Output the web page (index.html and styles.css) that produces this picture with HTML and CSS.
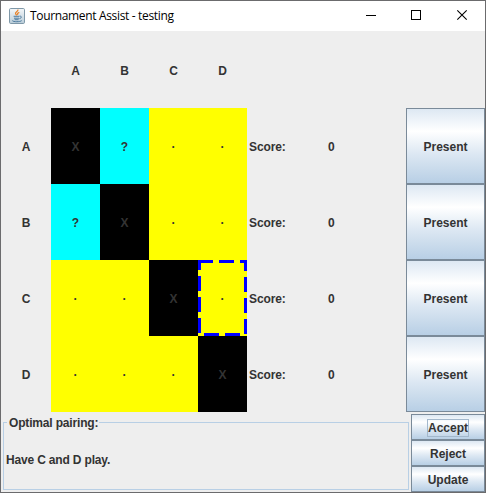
FILE: index.html
```html
<!DOCTYPE html>
<html lang="en">
<head>
<meta charset="utf-8">
<title>Tournament Assist - testing</title>
<link rel="stylesheet" href="styles.css">
</head>
<body>
<div class="window">
  <header class="titlebar">
    <svg class="app-icon" width="16" height="16" viewBox="0 0 16 16">
      <defs><linearGradient id="tile" x1="0" y1="0" x2="0" y2="1"><stop offset="0" stop-color="#f4f7f9"/><stop offset="1" stop-color="#b9ccd8"/></linearGradient></defs>
      <rect x=".5" y=".5" width="15" height="15" rx="1.2" fill="url(#tile)" stroke="#7f98a8"/>
      <path d="M8.800 1.500c1 2-3.200 2.600-2.200 4.300.3.600.9 1 1 1.700M10.300 4.300c-1.900.9-2.300 1.500-1.300 2.500" fill="none" stroke="#e8832a" stroke-width="1.300"/>
      <path d="M4.600 8.300h5.600M5 10.200h5M10.500 8.200c2.700-.4 2.300 1.900-.1 2.500M5.600 11.700h4M3.300 12.600c1 1.500 7.900 1.400 9.400 0" fill="none" stroke="#4f7c9f"/>
    </svg>
    <span class="title">Tournament Assist - testing</span>
    <div class="controls">
      <svg width="46" height="30"><path d="M19 14.500h10" stroke="#000"/></svg>
      <svg width="46" height="30"><rect x="18.500" y="9.500" width="9" height="9" fill="none" stroke="#000"/></svg>
      <svg width="46" height="30"><path d="M18.300 9.300l9.400 9.400M27.700 9.300l-9.400 9.400" stroke="#000" stroke-width="1.100"/></svg>
    </div>
  </header>
  <main class="board">
    <span></span><span>A</span><span>B</span><span>C</span><span>D</span><span></span><span></span><span></span>

    <span>A</span><span class="self">X</span><span class="open">?</span><span class="free">·</span><span class="free">·</span>
    <span class="score">Score:</span><span class="points">0</span><button>Present</button>

    <span>B</span><span class="open">?</span><span class="self">X</span><span class="free">·</span><span class="free">·</span>
    <span class="score">Score:</span><span class="points">0</span><button>Present</button>

    <span>C</span><span class="free">·</span><span class="free">·</span><span class="self">X</span>
    <span class="free selected">·<svg class="dashes" width="49" height="76" viewBox="0 0 49 76"><path fill="#00f" d="M0 0h15v3H0zM21 0h15v3H21zM42 0h7v3h-7zM46 0h3v11h-3zM46 17h3v15h-3zM46 38h3v15h-3zM46 59h3v15h-3zM6 73h15v3H6zM27 73h15v3H27zM0 0h3v10H0zM0 16h3v15H0zM0 37h3v15H0zM0 58h3v15H0z"/></svg></span>
    <span class="score">Score:</span><span class="points">0</span><button>Present</button>

    <span>D</span><span class="free">·</span><span class="free">·</span><span class="free">·</span><span class="self">X</span>
    <span class="score">Score:</span><span class="points">0</span><button>Present</button>
  </main>
  <footer class="bottom">
    <fieldset class="pairing">
      <legend>Optimal pairing:</legend>
      <p>Have C and D play.</p>
    </fieldset>
    <div class="actions">
      <button><span class="focus">Accept</span></button>
      <button>Reject</button>
      <button>Update</button>
    </div>
  </footer>
</div>
</body>
</html>
```
FILE: styles.css
```css
* { box-sizing: border-box; }
body { margin: 0; overflow: hidden; background: #6b6b6d; }
.window {
  width: 486px;
  height: 493px;
  border: 1px solid #6b6b6d;
  background: #eee;
  color: #333;
  font: bold 12px "Liberation Sans", Arial, sans-serif;
}
.titlebar {
  display: flex;
  align-items: center;
  height: 30px;
  padding-left: 8px;
  background: #fff;
}
.app-icon { display: block; margin-top: -1px; }
.title {
  margin-left: 5px;
  color: #000;
  font: 12px/16px "Open Sans", "Noto Sans", sans-serif;
  letter-spacing: -0.34px;
  white-space: nowrap;
}
.controls { display: flex; margin-left: auto; }
.controls svg { display: block; }
.board {
  display: grid;
  grid-template-columns: 50px repeat(4, 49px) 79px 80px 79px;
  grid-template-rows: 77px repeat(4, 76px);
}
.board > span { display: flex; align-items: center; justify-content: center; padding-top: 2px; }
.board > .score { justify-content: flex-start; padding-left: 2px; letter-spacing: -0.1px; }
.board > .points { justify-content: flex-start; padding-left: 2px; }
.board > .self { background: #000; }
.board > .open { background: #0ff; }
.board > .free { background: #ff0; }
.selected { position: relative; }
.dashes { position: absolute; top: 0; left: 0; }
button {
  display: flex;
  align-items: center;
  justify-content: center;
  margin: 0;
  padding: 1px 0 0;
  border: 1px solid #7a8a99;
  border-radius: 0;
  background: linear-gradient(#dde8f3 0%, #fff 30%, #dde8f3 60%, #b8cfe5 100%);
  color: #333;
  font: inherit;
}
.bottom { display: flex; padding: 2px 0 0 2px; }
.pairing {
  width: 406px;
  height: 76px;
  margin: 0 2px 0 0;
  padding: 0;
  border: 1px solid #b8cfe5;
  letter-spacing: -0.17px;
}
.pairing legend { margin-left: 3px; padding: 2px 1px 0 2px; line-height: 15px; }
.pairing p { margin: 0; padding: 22px 0 0 2px; line-height: 15px; }
.actions { display: grid; grid-template-rows: repeat(3, 26px); width: 74px; }
.focus { height: 18px; border: 1px solid #a3b8cc; line-height: 17px; }
```
